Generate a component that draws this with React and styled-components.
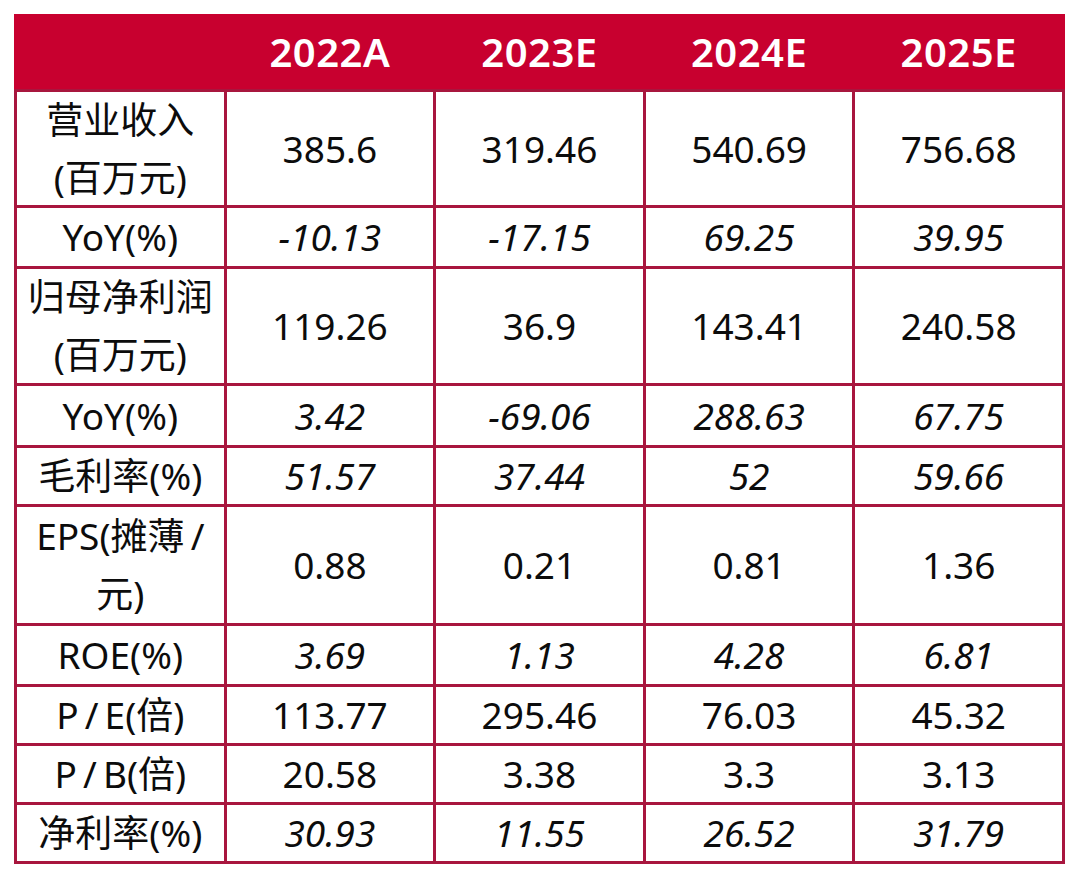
import React from 'react'
import styled, { createGlobalStyle } from 'styled-components'

const GlobalStyle = createGlobalStyle`
  html, body {
    margin: 0;
    padding: 0;
    background: #ffffff;
  }
  body {
    font-family: "Noto Sans", "Noto Sans CJK SC", sans-serif;
    color: #0c0c0c;
  }
`;

const LINE = '#a8163e';
const RED = '#c8002f';

const Frame = styled.div`
  margin: 14px 0 0 14px;
  width: 1051px;
`;

const HeaderRow = styled.div`
  display: grid;
  grid-template-columns: repeat(5, 1fr);
  column-gap: 3px;
  padding: 0 3px;
  height: 75px;
  background: ${RED};
`;

const HeadCell = styled.div`
  display: flex;
  align-items: center;
  justify-content: center;
  color: #ffffff;
  font-size: 40px;
  font-weight: 600;
  letter-spacing: 0.5px;
`;

const Body = styled.div`
  display: flex;
  flex-direction: column;
  gap: 3px;
  padding: 3px;
  background: ${LINE};
`;

const Row = styled.div`
  display: grid;
  grid-template-columns: repeat(5, 1fr);
  grid-template-rows: ${(p) => p.$h}px;
  column-gap: 3px;
  height: ${(p) => p.$h}px;
`;

const Cell = styled.div`
  display: flex;
  align-items: center;
  justify-content: center;
  min-height: 0;
  text-align: center;
  background: #ffffff;
  font-size: 37px;
  line-height: 58px;
  font-style: ${(p) => (p.$italic ? 'italic' : 'normal')};
  white-space: nowrap;
`;

const Label = styled(Cell)`
  font-size: 37px;
`;

const years = ['2022A', '2023E', '2024E', '2025E'];

const rows = [
  { label: ['营业收入', '(百万元)'], h: 113, vals: ['385.6', '319.46', '540.69', '756.68'] },
  { label: ['YoY(%)'], h: 58, italic: true, vals: ['-10.13', '-17.15', '69.25', '39.95'] },
  { label: ['归母净利润', '(百万元)'], h: 114, vals: ['119.26', '36.9', '143.41', '240.58'] },
  { label: ['YoY(%)'], h: 59, italic: true, vals: ['3.42', '-69.06', '288.63', '67.75'] },
  { label: ['毛利率(%)'], h: 56, italic: true, vals: ['51.57', '37.44', '52', '59.66'] },
  { label: ['EPS(摊薄\u2009/', '元)'], h: 116, vals: ['0.88', '0.21', '0.81', '1.36'] },
  { label: ['ROE(%)'], h: 58, italic: true, vals: ['3.69', '1.13', '4.28', '6.81'] },
  { label: ['P\u2009/\u2009E(倍)'], h: 56, vals: ['113.77', '295.46', '76.03', '45.32'] },
  { label: ['P\u2009/\u2009B(倍)'], h: 56, vals: ['20.58', '3.38', '3.3', '3.13'] },
  { label: ['净利率(%)'], h: 56, italic: true, vals: ['30.93', '11.55', '26.52', '31.79'] },
];

export default function App() {
  return (
    <>
      <GlobalStyle />
      <Frame>
        <HeaderRow>
          <HeadCell />
          {years.map((y) => (
            <HeadCell key={y}>{y}</HeadCell>
          ))}
        </HeaderRow>
        <Body>
          {rows.map((r, i) => (
            <Row key={i} $h={r.h}>
              <Label>
                <div>
                  {r.label.map((l, j) => (
                    <div key={j}>{l}</div>
                  ))}
                </div>
              </Label>
              {r.vals.map((v, j) => (
                <Cell key={j} $italic={r.italic}>{v}</Cell>
              ))}
            </Row>
          ))}
        </Body>
      </Frame>
    </>
  );
}
